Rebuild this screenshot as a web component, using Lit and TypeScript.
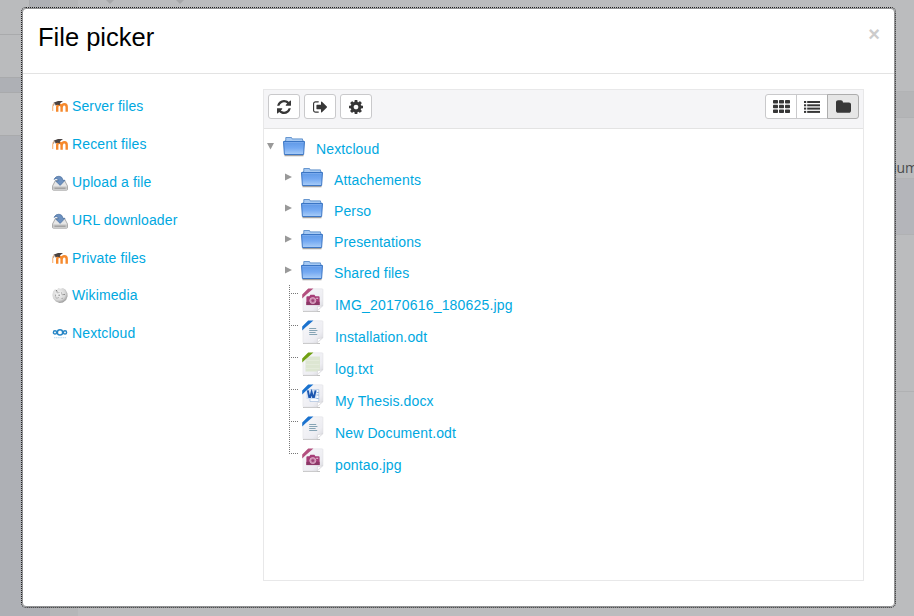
import { LitElement, html, css, svg } from "lit";
import { customElement } from "lit/decorators.js";

const COG = "M1024 768q0-106-75-181t-181-75-181 75-75 181 75 181 181 75 181-75 75-181zm512-109v222q0 12-8 23t-20 13l-185 28q-19 54-39 91 35 50 107 138 10 12 10 25t-9 23q-27 37-99 108t-94 71q-12 0-26-9l-138-108q-44 23-91 38-16 136-29 186-7 28-36 28h-222q-14 0-24.5-8.5t-11.5-21.5l-28-184q-49-16-90-37l-141 107q-10 9-25 9-14 0-25-11-126-114-165-168-7-10-7-23 0-12 8-23 15-21 51-66.5t54-70.5q-27-50-41-99l-183-27q-13-2-21-12.5t-8-23.5v-222q0-12 8-23t19-13l186-28q14-46 39-92-40-57-107-138-10-12-10-24 0-10 9-23 26-36 98.5-107.5t94.5-71.5q13 0 26 10l138 107q44-23 91-38 16-136 29-186 7-28 36-28h222q14 0 24.5 8.5t11.5 21.5l28 184q49 16 90 37l142-107q9-9 24-9 13 0 25 10 129 119 165 170 7 8 7 22 0 12-8 23-15 21-51 66.5t-54 70.5q26 50 41 98l183 28q13 2 21 12.5t8 23.5z";
const REFRESH = "M1511 928q0 5-1 7-64 268-268 434.5t-478 166.5q-146 0-282.5-55t-243.5-157l-129 129q-19 19-45 19t-45-19-19-45v-448q0-26 19-45t45-19h448q26 0 45 19t19 45-19 45l-137 137q71 66 161 102t187 36q134 0 250-65t186-179q11-17 53-117 8-23 30-23h192q13 0 22.5 9.5t9.5 22.5zm25-800v448q0 26-19 45t-45 19h-448q-26 0-45-19t-19-45 19-45l138-138q-148-137-349-137-134 0-250 65t-186 179q-11 17-53 117-8 23-30 23h-199q-13 0-22.5-9.5t-9.5-22.5v-7q65-268 270-434.5t480-166.5q146 0 284 55.5t245 156.5l130-129q19-19 45-19t45 19 19 45z";
const EXIT = "M640 1440q0 4 1 20t.5 26.5-3 23.5-10 19.5-20.5 6.5h-320q-119 0-203.5-84.5t-84.5-203.5v-704q0-119 84.5-203.5t203.5-84.5h320q13 0 22.5 9.5t9.5 22.5q0 4 1 20t.5 26.5-3 23.5-10 19.5-20.5 6.5h-320q-66 0-113 47t-47 113v704q0 66 47 113t113 47h312l11.5 1 11.5 3 8 5.5 7 9 2 13.5zm928-544q0 26-19 45l-544 544q-19 19-45 19t-45-19-19-45v-288h-448q-26 0-45-19t-19-45v-384q0-26 19-45t45-19h448v-288q0-26 19-45t45-19 45 19l544 544q19 19 19 45z";
const FOLDER = "M1664 608v704q0 92-66 158t-158 66h-1216q-92 0-158-66t-66-158v-960q0-92 66-158t158-66h320q92 0 158 66t66 158v32h672q92 0 158 66t66 158z";

const glyph = (box: string, w: number, h: number, d: string) =>
  html`<svg class="glyph" width=${w} height=${h} viewBox=${box}><path d=${d} /></svg>`;

const gridGlyph = html`<svg class="glyph" width="17" height="13" viewBox="0 0 17 13">
  ${[0, 4.7, 9.4].map((y) => [0, 6, 12].map((x) => svg`<rect x=${x} y=${y} width="5" height="3.5" rx="0.7"/>`))}
</svg>`;
const listGlyph = html`<svg class="glyph" width="16" height="12" viewBox="0 0 16 12">
  ${[0, 3.3, 6.6, 9.9].map((y) => svg`<rect x="0" y=${y} width="2.2" height="2"/><rect x="3.2" y=${y} width="12.8" height="2"/>`)}
</svg>`;

const moodle = html`<svg width="16" height="16" viewBox="0 0 16 16">
  <path d="M.7 13V8.6C.7 7 1.6 5.8 2.8 5.4" fill="none" stroke="#f9b982" stroke-width="1.2" />
  <path d="M5.2 13.7V9.3c0-1.7.9-2.5 2.2-2.5s2.2.9 2.2 2.5v4.4M9.8 9.3c0-1.7 1-3.1 2.6-3.1 1.5 0 2.3 1.2 2.3 2.9v4.6" fill="none" stroke="#f6892c" stroke-width="2.4" />
  <path d="M1.4 4.8 6 3l5 .1L8 5.2l-.2 2.2Q5.6 6 3.4 7.4L3 5.6Z" fill="#4a4342" />
  <path d="M2.4 5 1.5 7.8" stroke="#8a8584" stroke-width=".7" />
</svg>`;

const upload = html`<svg class="low" width="16" height="16" viewBox="0 0 16 16">
  <path d="M3.4 5.5h9.2l2.9 5.6v3.2q0 .9-.9.9H1.4q-.9 0-.9-.9v-3.2Z" fill="#e6e6e6" stroke="#999" stroke-width=".8" />
  <path d="M1 11.4h14v3.2H1z" fill="#c8c8c8" /><path d="M2.5 13.2h11" stroke="#858585" stroke-width=".8" />
  <path d="M2 4.4Q3.6 1 7 1.2q3.5.3 4 4.1h2L8.2 10.4 3.6 6h2.6Q6.4 4 4.9 3.7 3.4 3.5 2 4.4Z" fill="#6d91c0" stroke="#4b709f" stroke-width=".7" />
</svg>`;

const wiki = html`<svg width="16" height="16" viewBox="0 0 16 16">
  <defs><radialGradient id="g" cx=".42" cy=".38" r=".66"><stop offset="0" stop-color="#f6f6f6" /><stop offset=".65" stop-color="#d8d8d8" /><stop offset="1" stop-color="#929292" /></radialGradient></defs>
  <path d="M1.2 4.2 3 2.3l2 .8L6.2 1l2.4.8L10.8 1l2.8 1.8 1.8 3.4.2 3-1.5 3.7-3.2 2.5-3.4.5-3.6-1.3L1.2 11.6.3 8Z" fill="url(#g)" />
  <path d="M4.6 3.4 5.2 6l2.4-.4M9.4 5.2l.6 2.6 3-.4M3.4 9.4l1.2 2 2.4-1" fill="none" stroke="#a2a2a2" stroke-width=".7" />
  <path d="m4.2 3.2.8 1.1M6.5 8.2h1.3M11.7 7l.7.8M3.2 8l.7.5M10 11.6l.6-.7" stroke="#5c5c5c" stroke-width=".9" />
</svg>`;

const cloud = html`<svg width="16" height="16" viewBox="0 0 16 16">
  <g fill="none" stroke="#2585c6" stroke-width="1.4"><circle cx="8" cy="7.4" r="2.6" /><circle cx="3" cy="7.4" r="1.6" /><circle cx="13" cy="7.4" r="1.6" /></g>
  <path d="M2 12.6h12" stroke="#c3dff1" stroke-width="1.2" stroke-dasharray="1.2 .6" />
</svg>`;

const folderIcon = html`<svg class="folder" width="24" height="22" viewBox="0 0 24 22">
  <defs><linearGradient id="f" x2="0" y2="1"><stop offset="0" stop-color="#5e98e6" /><stop offset=".5" stop-color="#74a9f2" /><stop offset="1" stop-color="#a9cdf8" /></linearGradient></defs>
  <path d="M2.5 19.5h19" stroke="#666" stroke-width="1.5" opacity=".6" />
  <path d="M3 7V4.5h.8V1.5H9.5l.7 1.4h10.3v1.4h.6V7" fill="#a6c9f3" stroke="#5a8dcb" stroke-width=".9" />
  <path d="M1.5 5.5h21L21.6 18.5H2.4Z" fill="url(#f)" stroke="#3672c2" stroke-width=".95" stroke-linejoin="round" />
  <path d="M2.4 6.5h19.2" stroke="#7fadee" stroke-width=".8" />
</svg>`;

const art: Record<string, unknown> = {
  image: svg`<path d="M5.4 9.3q0-1 1-1h2l1-1.6h4l1 1.6h3.2q1 0 1 1v7.8H5.4Z" fill="#a63d77"/><path d="M5.4 13.8h13.2v3.3H5.4Z" fill="#8c3767"/><circle cx="11.8" cy="12.6" r="3" fill="#c983aa" stroke="#dcb0c8" stroke-width=".9"/><circle cx="11.8" cy="12.6" r="1.4" fill="#9a4375"/><path d="M15.2 9.7h2v1.3h-2" fill="#dba9c5"/>`,
  text: svg`<path d="M8.2 8.5h7M8.2 10.5h8.2M8.2 12.5h6.4M8.2 14.5h8" stroke="#86a4b5" stroke-width="1.1"/>`,
  log: svg`<path d="M4.5 4.5h14.5v15H4.5Z" fill="#dde6d2"/><path d="M5 8.5h13.5M5 12.5h13.5M5 16.5h13.5" stroke="#e6ede0" stroke-width=".7"/>`,
  word: svg`<path d="M9 5.5h8.8v12H9Z" fill="#fafcff" stroke="#a9c0de" stroke-width=".7"/><path d="M15.4 8.5h2.4M15.4 11h2.4M14 14.5h3.6" stroke="#8fb0db"/><path d="M5.5 5.5h10v9.5h-10Z" fill="#cfdff4"/><path d="m6.8 6.4 1.4 6.6h1L10.6 8.2 12 13h1l1.6-6.6" fill="none" stroke="#1d57b0" stroke-width="1.9"/>`,
};

const fileIcon = (kind: string, color: string) => html`<svg class="sheet" width="24" height="26" viewBox="0 0 24 26">
  <defs><linearGradient id="p" x2="1" y2="1"><stop offset="0" stop-color="#f8f8fa" /><stop offset=".7" stop-color="#ededf2" /><stop offset="1" stop-color="#d3d3d8" /></linearGradient></defs>
  <path d="M2 23.5h17" stroke="#999" stroke-width="1" opacity=".6" />
  <path d="M2 .8h19q1 0 1 1v16L16 23H3q-1 0-1-1Z" fill="url(#p)" stroke="#e2e2e6" stroke-width=".6" />
  ${art[kind]}
  <path d="M16 23q1-2 .5-4.5 2.4.6 5.2-1Z" fill="#fff" stroke="#cfcfd3" stroke-width=".5" />
  <path d="M0 11V0h12Z" fill="#fff" />
  <path d="M1.2 10.4V6.4L7.2.4H12.4L4.6 7.2Z" fill=${color} />
</svg>`;

const SOURCES: [unknown, string][] = [
  [moodle, "Server files"], [moodle, "Recent files"], [upload, "Upload a file"], [upload, "URL downloader"],
  [moodle, "Private files"], [wiki, "Wikimedia"], [cloud, "Nextcloud"],
];
const FOLDERS = ["Attachements", "Perso", "Presentations", "Shared files"];
const FILES: [string, string, string][] = [
  ["image", "#b3507f", "IMG_20170616_180625.jpg"],
  ["text", "#1b72ce", "Installation.odt"],
  ["log", "#70a012", "log.txt"],
  ["word", "#1b72ce", "My Thesis.docx"],
  ["text", "#1b72ce", "New Document.odt"],
  ["image", "#b3507f", "pontao.jpg"],
];

@customElement("page-backdrop")
class PageBackdrop extends LitElement {
  static styles = css`
    :host { display: grid; grid-template-columns: 50px 28px 1fr 50px; background: #bbbcbe; overflow: hidden; }
    .rail { background: #aeb0b5; }
    .card { box-sizing: border-box; width: 30px; background: #babbbd; border: 1px solid #a9aaac; border-left: 0; }
    .c1 { height: 35px; border-top: 0; }
    .c2 { height: 43px; border-top: 0; }
    .c3 { height: 44px; margin-top: 14px; }
    .gutter { background: #b5b6b8; }
    .top { display: flex; gap: 62px; padding-left: 28px; }
    .tip { width: 0; height: 0; border: 4px solid transparent; border-top: 4px solid #a5a6a8; border-bottom: 0; }
    .right { display: flex; flex-direction: column; font: 14px/20px "Open Sans", sans-serif; color: #4b4c4e; }
    .band { box-sizing: border-box; border-top: 1px solid #b2b3b5; border-bottom: 1px solid #b0b1b3; background: #b4b5b7; }
    .b1 { height: 27px; margin-top: 91px; }
    .b2 { height: 57px; background: #b4b5ba; }
    .word { box-sizing: border-box; height: 60px; padding: 40px 0 0 29px; white-space: nowrap; }
    .rule { height: 1px; margin-top: 156px; background: #b0b1b3; }
  `;
  render() {
    return html`<div class="rail"><div class="card c1"></div><div class="card c2"></div><div class="card c3"></div></div>
      <div class="gutter"></div>
      <div class="top"><i class="tip"></i><i class="tip"></i></div>
      <div class="right"><div class="band b1"></div><div class="word">ium</div><div class="band b2"></div><div class="rule"></div></div>`;
  }
}

@customElement("app-root")
class AppRoot extends LitElement {
  static styles = css`
    :host { display: grid; width: 914px; height: 616px; overflow: hidden; font: 14px/20px "Liberation Sans", Arial, sans-serif; color: #00a8df; }
    page-backdrop, .stage { grid-area: 1 / 1; min-width: 0; min-height: 0; }
    .stage { padding: 8px 19px 9px 22px; z-index: 1; display: grid; }
    .dialog { box-sizing: border-box; background: #fff; border: 1px solid #929395; border-radius: 4px; outline: 1px dotted #222; display: flex; flex-direction: column; }
    header { box-sizing: border-box; height: 65px; border-bottom: 1px solid #e3e3e3; display: flex; justify-content: space-between; padding: 8px 14px 0 15px; }
    h1 { margin: 0; font-size: 25.5px; line-height: 40px; font-weight: 400; color: #000; }
    .close { font-size: 20px; line-height: 34px; font-weight: 700; color: #ccc; }
    .main { flex: 1; display: flex; padding: 15px 30px 25px 29px; letter-spacing: 0.12px; }
    nav { width: 211px; margin-top: -1.8px; }
    .source { height: 37.85px; display: flex; align-items: center; gap: 4px; }
    .source svg { flex: none; }
    .source .low { margin-top: 2px; }
    .panel { flex: 1; border: 1px solid #e8e8e9; }
    .tools { box-sizing: border-box; height: 39px; background: #f5f5f7; border-bottom: 1px solid #e3e3e3; display: flex; gap: 4px; padding: 4px; }
    .btn { box-sizing: border-box; width: 32px; height: 25px; border: 1px solid #c9c9cb; border-radius: 3px; background: #fff; display: flex; align-items: center; justify-content: center; }
    .glyph { fill: #373737; display: block; }
    .views { display: flex; margin-left: auto; }
    .views .btn:first-child { border-radius: 3px 0 0 3px; }
    .views .btn + .btn { border-radius: 0; margin-left: -1px; }
    .views .btn:last-child { border-radius: 0 3px 3px 0; background: #e6e6e6; border-color: #adadad; }
    .tree { padding: 4px 0 0 3px; }
    .row { height: 31px; display: flex; align-items: center; }
    .row.child { padding-left: 18px; }
    .arrow { width: 8px; height: 8px; margin: 0 7px 6px 0; fill: #999; flex: none; }
    .folder { margin: -4px 10px 0 0; flex: none; }
    .files { position: relative; padding-left: 23px; }
    .files::before { content: ""; position: absolute; left: 22px; top: -3px; width: 1px; height: 169px; background: repeating-linear-gradient(#777 0 1px, transparent 1px 2px); }
    .file { height: 32px; display: flex; }
    .twig { width: 8px; height: 1px; margin: 5px 3px 0 0; background: repeating-linear-gradient(90deg, transparent 0 1px, #777 1px 2px); }
    .sheet { margin: 0 10px 0 0; flex: none; }
    .name { line-height: 35px; }
    .name.wide { letter-spacing: 0.18px; }
  `;
  render() {
    return html`<page-backdrop></page-backdrop>
      <div class="stage"><section class="dialog">
        <header><h1>File picker</h1><span class="close">×</span></header>
        <div class="main">
          <nav>${SOURCES.map(([icon, label]) => html`<div class="source">${icon}<span>${label}</span></div>`)}</nav>
          <div class="panel">
            <div class="tools">
              <span class="btn">${glyph("0 0 1536 1536", 14, 14, REFRESH)}</span>
              <span class="btn">${glyph("0 256 1568 1280", 14, 12, EXIT)}</span>
              <span class="btn">${glyph("0 0 1536 1536", 14, 14, COG)}</span>
              <div class="views">
                <span class="btn">${gridGlyph}</span><span class="btn">${listGlyph}</span><span class="btn">${glyph("0 128 1664 1408", 15, 13, FOLDER)}</span>
              </div>
            </div>
            <div class="tree">
              <div class="row"><svg class="arrow" viewBox="0 0 8 8"><path d="M0 1h7L3.5 7.5Z" /></svg>${folderIcon}<span>Nextcloud</span></div>
              ${FOLDERS.map((n) => html`<div class="row child"><svg class="arrow" viewBox="0 0 8 8"><path d="M0 .5v7L7 4Z" /></svg>${folderIcon}<span>${n}</span></div>`)}
              <div class="files">${FILES.map(([k, c, n]) => html`<div class="file"><i class="twig"></i>${fileIcon(k, c)}<span class="name ${n.length > 20 ? "wide" : ""}">${n}</span></div>`)}</div>
            </div>
          </div>
        </div>
      </section></div>`;
  }
}
